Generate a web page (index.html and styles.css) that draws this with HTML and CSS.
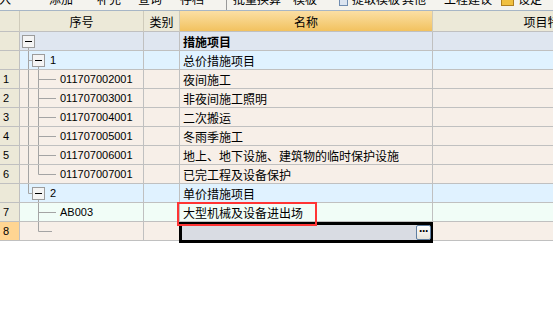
FILE: index.html
```html
<!DOCTYPE html>
<html lang="zh-CN">

<head>
  <meta charset="UTF-8" />
  <title>措施项目</title>
  <meta name="viewport" content="width=device-width, initial-scale=1.0" />
  <link rel="stylesheet" href="styles.css">
</head>

<body>

  <!-- toolbar, only the bottom of it is on screen -->
  <div class="toolbar">
    <span class="tb" style="width:49px">插入</span>
    <span class="tb" style="width:48px">添加</span>
    <span class="tb" style="width:41px">补充</span>
    <span class="tb" style="width:42px">查询</span>
    <span class="tb" style="width:46px">存档</span>
    <span class="sep"></span>
    <span class="tb" style="width:60px">批量换算</span>
    <span class="tb" style="width:46px">模板</span>
    <span class="tb" style="width:63px"><i class="ico"></i>提取模板</span>
    <span class="tb" style="width:42px">其他</span>
    <span class="tb" style="width:57px">工程建议</span>
    <span class="tb"><i class="ico ico-y"></i>设定</span>
  </div>

  <div class="grid">
    <div class="row head">
      <div class="cell num"></div>
      <div class="cell center">序号</div>
      <div class="cell center">类别</div>
      <div class="cell center name-head">名称</div>
      <div class="cell center">项目特征</div>
    </div>

    <div class="row section">
      <div class="cell num"></div>
      <div class="cell">
        <svg class="tree" width="40" height="18">
          <line x1="8.5" y1="15" x2="8.5" y2="19" />
          <rect class="box" x="2.5" y="3.5" width="12" height="12" />
          <line class="minus" x1="5" y1="9.5" x2="12" y2="9.5" />
        </svg>
      </div>
      <div class="cell"></div>
      <div class="cell pad bold">措施项目</div>
      <div class="cell"></div>
    </div>

    <div class="row group">
      <div class="cell num"></div>
      <div class="cell">
        <svg class="tree" width="30" height="18">
          <line x1="8.5" y1="-1" x2="8.5" y2="19" />
          <line x1="8.5" y1="9.5" x2="12" y2="9.5" />
          <line x1="18.5" y1="15" x2="18.5" y2="19" />
          <rect class="box" x="12.5" y="3.5" width="12" height="12" />
          <line class="minus" x1="15" y1="9.5" x2="22" y2="9.5" />
        </svg>1
      </div>
      <div class="cell"></div>
      <div class="cell pad">总价措施项目</div>
      <div class="cell"></div>
    </div>

    <div class="row item">
      <div class="cell num">1</div>
      <div class="cell">
        <svg class="tree" width="40" height="18">
          <line x1="8.5" y1="-1" x2="8.5" y2="19" />
          <line x1="18.5" y1="-1" x2="18.5" y2="19" />
          <line x1="18.5" y1="9.5" x2="36" y2="9.5" />
        </svg>011707002001
      </div>
      <div class="cell"></div>
      <div class="cell pad">夜间施工</div>
      <div class="cell"></div>
    </div>

    <div class="row item">
      <div class="cell num">2</div>
      <div class="cell">
        <svg class="tree" width="40" height="18">
          <line x1="8.5" y1="-1" x2="8.5" y2="19" />
          <line x1="18.5" y1="-1" x2="18.5" y2="19" />
          <line x1="18.5" y1="9.5" x2="36" y2="9.5" />
        </svg>011707003001
      </div>
      <div class="cell"></div>
      <div class="cell pad">非夜间施工照明</div>
      <div class="cell"></div>
    </div>

    <div class="row item">
      <div class="cell num">3</div>
      <div class="cell">
        <svg class="tree" width="40" height="18">
          <line x1="8.5" y1="-1" x2="8.5" y2="19" />
          <line x1="18.5" y1="-1" x2="18.5" y2="19" />
          <line x1="18.5" y1="9.5" x2="36" y2="9.5" />
        </svg>011707004001
      </div>
      <div class="cell"></div>
      <div class="cell pad">二次搬运</div>
      <div class="cell"></div>
    </div>

    <div class="row item">
      <div class="cell num">4</div>
      <div class="cell">
        <svg class="tree" width="40" height="18">
          <line x1="8.5" y1="-1" x2="8.5" y2="19" />
          <line x1="18.5" y1="-1" x2="18.5" y2="19" />
          <line x1="18.5" y1="9.5" x2="36" y2="9.5" />
        </svg>011707005001
      </div>
      <div class="cell"></div>
      <div class="cell pad">冬雨季施工</div>
      <div class="cell"></div>
    </div>

    <div class="row item">
      <div class="cell num">5</div>
      <div class="cell">
        <svg class="tree" width="40" height="18">
          <line x1="8.5" y1="-1" x2="8.5" y2="19" />
          <line x1="18.5" y1="-1" x2="18.5" y2="19" />
          <line x1="18.5" y1="9.5" x2="36" y2="9.5" />
        </svg>011707006001
      </div>
      <div class="cell"></div>
      <div class="cell pad">地上、地下设施、建筑物的临时保护设施</div>
      <div class="cell"></div>
    </div>

    <div class="row item">
      <div class="cell num">6</div>
      <div class="cell">
        <svg class="tree" width="40" height="18">
          <line x1="8.5" y1="-1" x2="8.5" y2="19" />
          <line x1="18.5" y1="-1" x2="18.5" y2="9.5" />
          <line x1="18.5" y1="9.5" x2="36" y2="9.5" />
        </svg>011707007001
      </div>
      <div class="cell"></div>
      <div class="cell pad">已完工程及设备保护</div>
      <div class="cell"></div>
    </div>

    <div class="row group">
      <div class="cell num"></div>
      <div class="cell">
        <svg class="tree" width="30" height="18">
          <line x1="8.5" y1="-1" x2="8.5" y2="9.5" />
          <line x1="8.5" y1="9.5" x2="12" y2="9.5" />
          <line x1="18.5" y1="15" x2="18.5" y2="19" />
          <rect class="box" x="12.5" y="3.5" width="12" height="12" />
          <line class="minus" x1="15" y1="9.5" x2="22" y2="9.5" />
        </svg>2
      </div>
      <div class="cell"></div>
      <div class="cell pad">单价措施项目</div>
      <div class="cell"></div>
    </div>

    <div class="row added">
      <div class="cell num">7</div>
      <div class="cell">
        <svg class="tree" width="40" height="18">
          <line x1="18.5" y1="-1" x2="18.5" y2="19" />
          <line x1="18.5" y1="9.5" x2="36" y2="9.5" />
        </svg>AB003
      </div>
      <div class="cell"></div>
      <div class="cell pad marked">大型机械及设备进出场<span class="mark"></span></div>
      <div class="cell"></div>
    </div>

    <div class="row item">
      <div class="cell num current">8</div>
      <div class="cell">
        <svg class="tree" width="40" height="18">
          <line x1="18.5" y1="-1" x2="18.5" y2="9.5" />
          <line x1="18.5" y1="9.5" x2="32" y2="9.5" />
        </svg>
      </div>
      <div class="cell"></div>
      <div class="cell editing">
        <div class="editor">
          <span class="more">···</span>
        </div>
      </div>
      <div class="cell"></div>
    </div>
  </div>

</body>

</html>
```

FILE: styles.css
```css
/* ─── BASE ───────────────────────────────────────────────────────── */
* {
  box-sizing: border-box;
  margin: 0;
  padding: 0;
}

html,
body {
  width: 553px;
  height: 311px;
  background: #fff;
  overflow: hidden;
  font-family: "Liberation Sans", "Noto Sans CJK SC", sans-serif;
  font-size: 12px;
  color: #000;
}

/* ─── TOOLBAR ────────────────────────────────────────────────────── */
.toolbar {
  display: flex;
  height: 11px;
  background: #f4f3ee;
  border-bottom: 1px solid #a7b6c6;
  overflow: hidden;
}

.tb {
  display: flex;
  align-items: center;
  gap: 2px;
  flex-shrink: 0;
  height: 12px;
  line-height: 12px;
  margin-top: -6px;
  white-space: nowrap;
}

.tb:first-child {
  margin-left: -13px;
  width: 62px !important;
}

.sep {
  width: 1px;
  margin-right: 6px;
  background: #999;
}

.ico {
  display: inline-block;
  width: 9px;
  height: 12px;
  background: #dbe4f0;
  border: 1px solid #6f8cb0;
  margin-right: 2px;
}

.ico-y {
  width: 13px;
  background: #f0c040;
  border-color: #b08020;
}

/* ─── GRID ───────────────────────────────────────────────────────── */
.grid {
  width: 663px;
}

.row {
  display: grid;
  grid-template-columns: 20px 124px 36px 253px 230px;
  height: 19px;
}

.cell {
  display: flex;
  align-items: center;
  border-right: 1px solid #c0c0c0;
  border-bottom: 1px solid #c0c0c0;
  white-space: nowrap;
  overflow: hidden;
  font-size: 11px;
}

.cell.pad {
  padding-left: 3px;
  font-size: 12px;
}

.bold {
  font-weight: bold;
}

.center {
  justify-content: center;
}

.num {
  background: #ece9d8;
  padding-left: 3px;
}

.num.current {
  background: #ffd592;
}

/* header */
.head {
  height: 21px;
}

.head .cell {
  background: #ece9d8;
  font-size: 12px;
  border-color: #cfcbbb;
  border-bottom-color: #c0c0c0;
}

.head .name-head {
  background: linear-gradient(#fbdfa4, #f2c25f);
}

/* row colours */
.section .cell:not(.num) {
  background: #dfe6f0;
}

.group .cell:not(.num) {
  background: #e0f2ff;
}

.item .cell:not(.num) {
  background: #f7efe8;
}

.added .cell:not(.num) {
  background: #f1fdf7;
}

/* ─── TREE LINES ─────────────────────────────────────────────────── */
.tree {
  flex-shrink: 0;
  overflow: visible;
}

.tree line {
  stroke: #a4a4a4;
  stroke-width: 1;
}

.tree .box {
  fill: #f4f4f4;
  stroke: #9c9c9c;
}

.tree .minus {
  stroke: #000;
}

/* ─── MARKS & EDITOR ─────────────────────────────────────────────── */
.marked,
.editing {
  position: relative;
  overflow: visible;
}

.mark {
  position: absolute;
  left: -3px;
  top: -1px;
  width: 140px;
  height: 24px;
  border: 2px solid #ff3535;
  z-index: 2;
}

.editor {
  position: absolute;
  left: -1px;
  top: 0;
  right: -1px;
  height: 21px;
  border: 3px solid #000;
  background: #d9dce3;
  display: flex;
  justify-content: flex-end;
  align-items: center;
  z-index: 1;
}

.more {
  width: 15px;
  height: 15px;
  margin-right: -1px;
  border: 1px solid #5f7ea0;
  border-radius: 2px;
  background: linear-gradient(#ffffff, #e6e4dc);
  font-weight: bold;
  font-size: 12px;
  line-height: 10px;
  text-align: center;
  letter-spacing: -1px;
}
```
